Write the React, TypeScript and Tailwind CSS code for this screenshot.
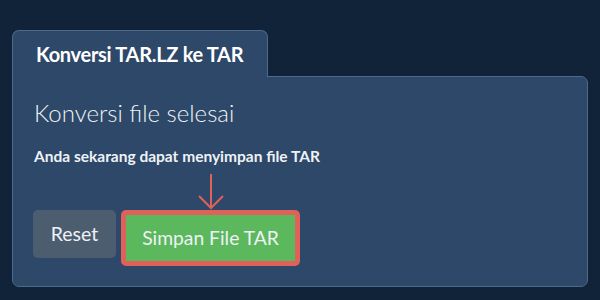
export default function App() {
  const lato = { fontFamily: "Lato, 'Noto Sans', sans-serif" } as const;

  return (
    <div className="w-[600px] h-[300px] bg-[#112339] pt-[30px] px-[12px]" style={lato}>
      <div className="flex flex-col w-[576px]">
        {/* Tab */}
        <div className="w-[256px] h-[47px] -mb-px relative z-10 bg-[#2d4868] border border-b-0 border-[#4d6a8a] rounded-t-[7px] flex items-center px-[23px]">
          <span className="text-white font-bold text-[20px] tracking-[-0.3px]">Konversi TAR.LZ ke TAR</span>
        </div>

        {/* Panel */}
        <div className="h-[211px] bg-[#2d4868] border border-[#4d6a8a] rounded-b-[7px] rounded-tr-[7px] px-[20px] pt-[21px]">
          <h1 className="ml-px text-[#eef2f6] font-light text-[24px] leading-[30px]">Konversi file selesai</h1>
          <p className="ml-px mt-[19px] text-[#eef2f6] font-bold text-[15.5px] leading-[18px]">
            Anda sekarang dapat menyimpan file TAR
          </p>

          <div className="flex items-start gap-[5px] mt-[8px]">
            <button className="mt-[37px] h-[48px] w-[83px] rounded-[5px] bg-[#4c5d6f] text-[#eef2f6] text-[19.5px]">
              Reset
            </button>
            <div className="flex flex-col items-center">
              <svg width="28" height="37" viewBox="0 0 28 37">
                <path d="M14 1 V35 M2 23 L14 35 L26 23" fill="none" stroke="#e0605a" strokeWidth="2" />
              </svg>
              <button className="h-[56px] w-[179px] rounded-[5px] border-[5px] border-[#e0605a] bg-[#5cb85c] text-[#eef2f6] text-[19.3px]">
                Simpan File TAR
              </button>
            </div>
          </div>
        </div>
      </div>
    </div>
  );
}
